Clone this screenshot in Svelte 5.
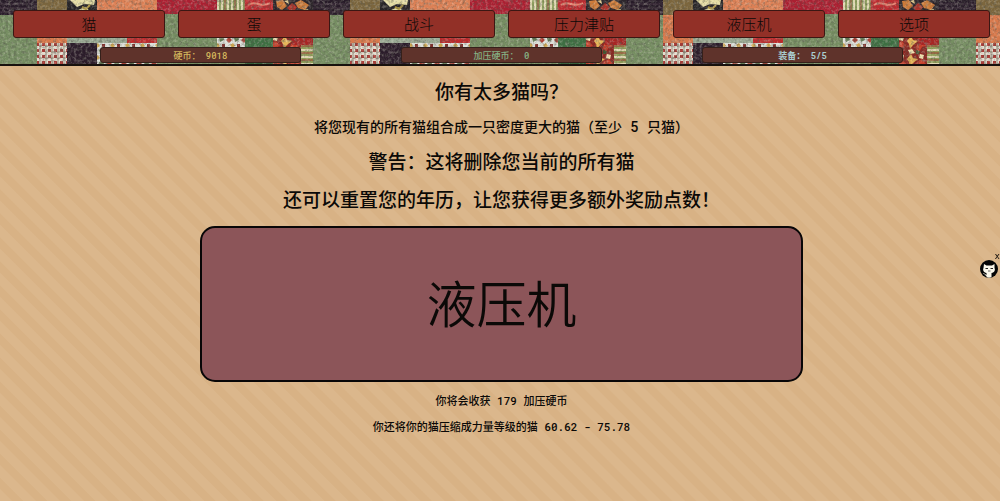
<script>
  const tabs = ['猫', '蛋', '战斗', '压力津贴', '液压机', '选项'];
  const stats = [
    { text: '硬币： 9018', kind: 'coins' },
    { text: '加压硬币： 0', kind: 'pressed' },
    { text: '装备： 5/5', kind: 'equipped' }
  ];
</script>

<div class="page">
  <header>
    <svg class="quilt" aria-hidden="true">
      <defs>
        <pattern id="gingham" width="6" height="6" patternUnits="userSpaceOnUse">
          <rect width="6" height="6" fill="#e6ddd0" />
          <path d="M0 1h3v3H0z" fill="#a63a35" />
          <path d="M3 4h3M4 0v6" stroke="#77705c" stroke-opacity="0.7" />
        </pattern>
        <pattern id="stripes" width="10" height="10" patternUnits="userSpaceOnUse">
          <rect width="10" height="10" fill="#8c9d5c" />
          <path d="M2 0v10M8 0v10" stroke="#ded7b0" stroke-width="2" />
          <path d="M5 0v10" stroke="#9c483d" />
        </pattern>
        <pattern id="stripesH" width="8" height="7" patternUnits="userSpaceOnUse">
          <rect width="8" height="7" fill="#8f9d57" />
          <path d="M0 1h8" stroke="#ddd5ae" stroke-width="2" />
          <path d="M0 4h8" stroke="#a13931" />
        </pattern>
        <pattern id="leaves" width="15" height="12" patternUnits="userSpaceOnUse">
          <rect width="15" height="12" fill="#dde0da" />
          <path d="M1 4l3-3 3 3-3 3z" fill="#a93e32" />
          <path d="M9 2l4-2 1 4-4 2z" fill="#5e7650" />
          <path d="M5 9l3-2 2 3-3 2z" fill="#caa24c" />
          <path d="M12 8h3v3h-3z" fill="#7d2f2c" />
        </pattern>
        <pattern id="autumn" width="20" height="18" patternUnits="userSpaceOnUse">
          <rect width="20" height="18" fill="#8a2822" />
          <path d="M1 5l4-5 2 4 5 1-5 4-3 4-1-5z" fill="#e6b355" />
          <path d="M11 8l5-3 4 5-4 1-3 5-3-4z" fill="#c63f2b" />
          <path d="M2 14l4-1 3 4-5 1zM14 0l4 1-1 4-4-1z" fill="#eedfae" />
          <path d="M10 14l4 1-1 3h-3z" fill="#42532f" />
        </pattern>
        <filter id="grain" x="0" y="0" width="100%" height="100%">
          <feTurbulence type="fractalNoise" baseFrequency="0.35" numOctaves="3" seed="4" />
          <feColorMatrix values="0 0 0 0 0.1  0 0 0 0 0.1  0 0 0 0 0.08  2 0 0 0 -0.9" />
        </filter>
        <filter id="light" x="0" y="0" width="100%" height="100%">
          <feTurbulence type="fractalNoise" baseFrequency="0.35" numOctaves="3" seed="19" />
          <feColorMatrix values="0 0 0 0 0.95  0 0 0 0 0.9  0 0 0 0 0.8  0 2 0 0 -0.9" />
        </filter>
        <pattern id="patchwork" width="313" height="66" patternUnits="userSpaceOnUse">
          <rect width="313" height="66" fill="#768e62" />
          <path d="M0 0h37v15H0z" fill="#271b28" />
          <path d="M0 4h37M0 8h37M0 12h37" stroke="#43323f" />
          <path d="M37 0h30v15H37z" fill="#7c663d" />
          <path d="M67 0h30v14H67z" fill="#252226" />
          <path d="M70 0l7 7 7-3 10 1 1-5zM78 10l7-3 5 4-3 3h-8z" fill="#e5dda4" />
          <path d="M82 7l4 2 4-4" fill="none" stroke="#a8903c" stroke-width="2" />
          <path d="M97 0h60v43H97z" fill="#dc8055" />
          <path d="M157 0h60v14h-60z" fill="#ab1f31" />
          <path d="M217 0h28v14h-28z" fill="url(#stripes)" />
          <path d="M245 0h28v14h-28z" fill="#bd2b30" />
          <path d="M248 5c8-6 12 4 22-2" fill="none" stroke="#e58371" stroke-width="2" />
          <path d="M273 0h40v14h-40z" fill="#2b242a" />
          <path d="M276 1l7-1 4 6-5 4-5-3zM295 3l6-3 8 5-4 5-7-2z" fill="#cd7a38" />
          <path d="M287 8l5-5 5 4-4 6z" fill="#ad3129" />
          <path d="M284 1l4-1 1 4zM302 10l6-1-1 4z" fill="#e1c989" />
          <path d="M37 15h30v28H37z" fill="#d8794c" />
          <path d="M67 34h60v9H67z" fill="#9aaa94" />
          <path d="M127 34h30v9h-30z" fill="#bd2a2c" />
          <path d="M217 34h28v13h-28z" fill="url(#leaves)" />
          <path d="M245 34h28v13h-28z" fill="#3d6f42" />
          <path d="M245 47h28v19h-28z" fill="#35603a" />
          <path d="M273 34h28v32h-28z" fill="url(#autumn)" />
          <path d="M292 37h21v8h-21z" fill="#a82524" />
          <path d="M301 45h12v21h-12z" fill="url(#stripesH)" />
          <path d="M37 43h30v23H37z" fill="url(#gingham)" />
          <path d="M67 43h30v23H67z" fill="#2b1c2a" />
          <path d="M97 43h60v23H97z" fill="url(#leaves)" />
        </pattern>
      </defs>
      <rect width="100%" height="100%" fill="url(#patchwork)" />
      <rect width="100%" height="100%" filter="url(#grain)" opacity="0.7" />
      <rect width="100%" height="100%" filter="url(#light)" opacity="0.35" />
    </svg>
    <nav>
      {#each tabs as tab}
        <button type="button">{tab}</button>
      {/each}
    </nav>
    <div class="stats">
      {#each stats as stat}
        <div class="stat {stat.kind}">{stat.text}</div>
      {/each}
    </div>
  </header>

  <main>
    <h2>你有太多猫吗？</h2>
    <h3>将您现有的所有猫组合成一只密度更大的猫（至少 5 只猫）</h3>
    <h2>警告：这将删除您当前的所有猫</h2>
    <h2>还可以重置您的年历，让您获得更多额外奖励点数！</h2>
    <button type="button" class="press">液压机</button>
    <p>你将会收获 179 加压硬币</p>
    <p>你还将你的猫压缩成力量等级的猫 60.62 - 75.78</p>
  </main>

  <aside>
    <button type="button" class="close" aria-label="x">x</button>
    <a href="#github" aria-label="GitHub">
      <svg viewBox="0 0 36 36" aria-hidden="true">
        <circle cx="18" cy="18" r="18" fill="#050505" />
        <path d="M8 8l5 3h11l5-3v8c2 4 0 9-6 10v8c-3 2-7 2-10 0v-8c-6-1-8-6-6-10z" fill="#fbf7ea" />
        <path d="M14 31c-4 0-4-4-7-4" fill="none" stroke="#fbf7ea" stroke-width="2" />
        <path d="M11 17h5M21 17h5" stroke="#222" stroke-width="2" />
        <path d="M16 22h5" stroke="#666" stroke-width="2" />
      </svg>
    </a>
  </aside>
</div>

<style>
  :global(body) {
    margin: 0;
    background: #dab68a;
  }

  .page {
    min-height: 100vh;
    font-family: "Roboto Mono", "DejaVu Sans Mono", "Noto Sans CJK SC", monospace;
    font-weight: 500;
    color: #0b0907;
    background: repeating-linear-gradient(45deg, #dbb78c 0 8px, #d8b285 9px 16px, #dbb78c 17px);
  }

  header {
    position: relative;
    border-bottom: 2px solid #17110d;
    padding: 10px 0 1px;
  }

  .quilt {
    position: absolute;
    inset: 0;
    width: 100%;
    height: 100%;
  }

  nav {
    position: relative;
    display: flex;
    gap: 13px;
    padding: 0 10px 0 13px;
  }

  button {
    font-family: inherit;
    color: inherit;
    cursor: pointer;
  }

  nav button {
    flex: 1;
    height: 28px;
    padding: 0;
    border: 1px solid #3b1713;
    border-radius: 3px;
    background: #923027;
    font-size: 15px;
    font-weight: 300;
    line-height: 24px;
  }

  .stats {
    position: relative;
    display: flex;
    justify-content: center;
    gap: 10%;
    margin-top: 9px;
    padding-left: 3px;
  }

  .stat {
    box-sizing: border-box;
    width: 20.2%;
    height: 16px;
    border: 1px solid #35201a;
    border-radius: 3px;
    background: #5f332b;
    font-size: 9px;
    line-height: 15px;
    text-align: center;
    white-space: pre;
  }

  .coins {
    color: #d3b65d;
  }

  .pressed {
    color: #85b184;
  }

  .equipped {
    color: #a9cdd0;
    font-weight: 700;
  }

  main {
    display: flex;
    flex-direction: column;
    align-items: center;
    padding: 14px 0 0 3px;
    text-align: center;
  }

  h2,
  h3,
  p {
    margin: 0;
    font-weight: 500;
  }

  h2 {
    font-size: 19px;
    line-height: 24px;
    margin-bottom: 14px;
  }

  h3 {
    font-size: 14px;
    line-height: 18px;
    margin-bottom: 14px;
  }

  .press {
    box-sizing: border-box;
    width: 60.4%;
    height: 156px;
    margin-bottom: 11px;
    padding: 0 0 6px;
    border: 2px solid #080607;
    border-radius: 15px;
    background: #8c5559;
    font-size: 50px;
    font-weight: 350;
  }

  p {
    font-size: 11px;
    line-height: 16px;
    margin-bottom: 10px;
  }

  aside {
    position: fixed;
    top: 251px;
    right: 0;
    display: flex;
    flex-direction: column;
    align-items: flex-end;
  }

  .close {
    padding: 0;
    border: 0;
    background: none;
    font-size: 9px;
    line-height: 9px;
  }

  aside a {
    display: block;
    width: 18px;
    height: 18px;
    margin-right: 2px;
  }

  aside svg {
    display: block;
  }
</style>
